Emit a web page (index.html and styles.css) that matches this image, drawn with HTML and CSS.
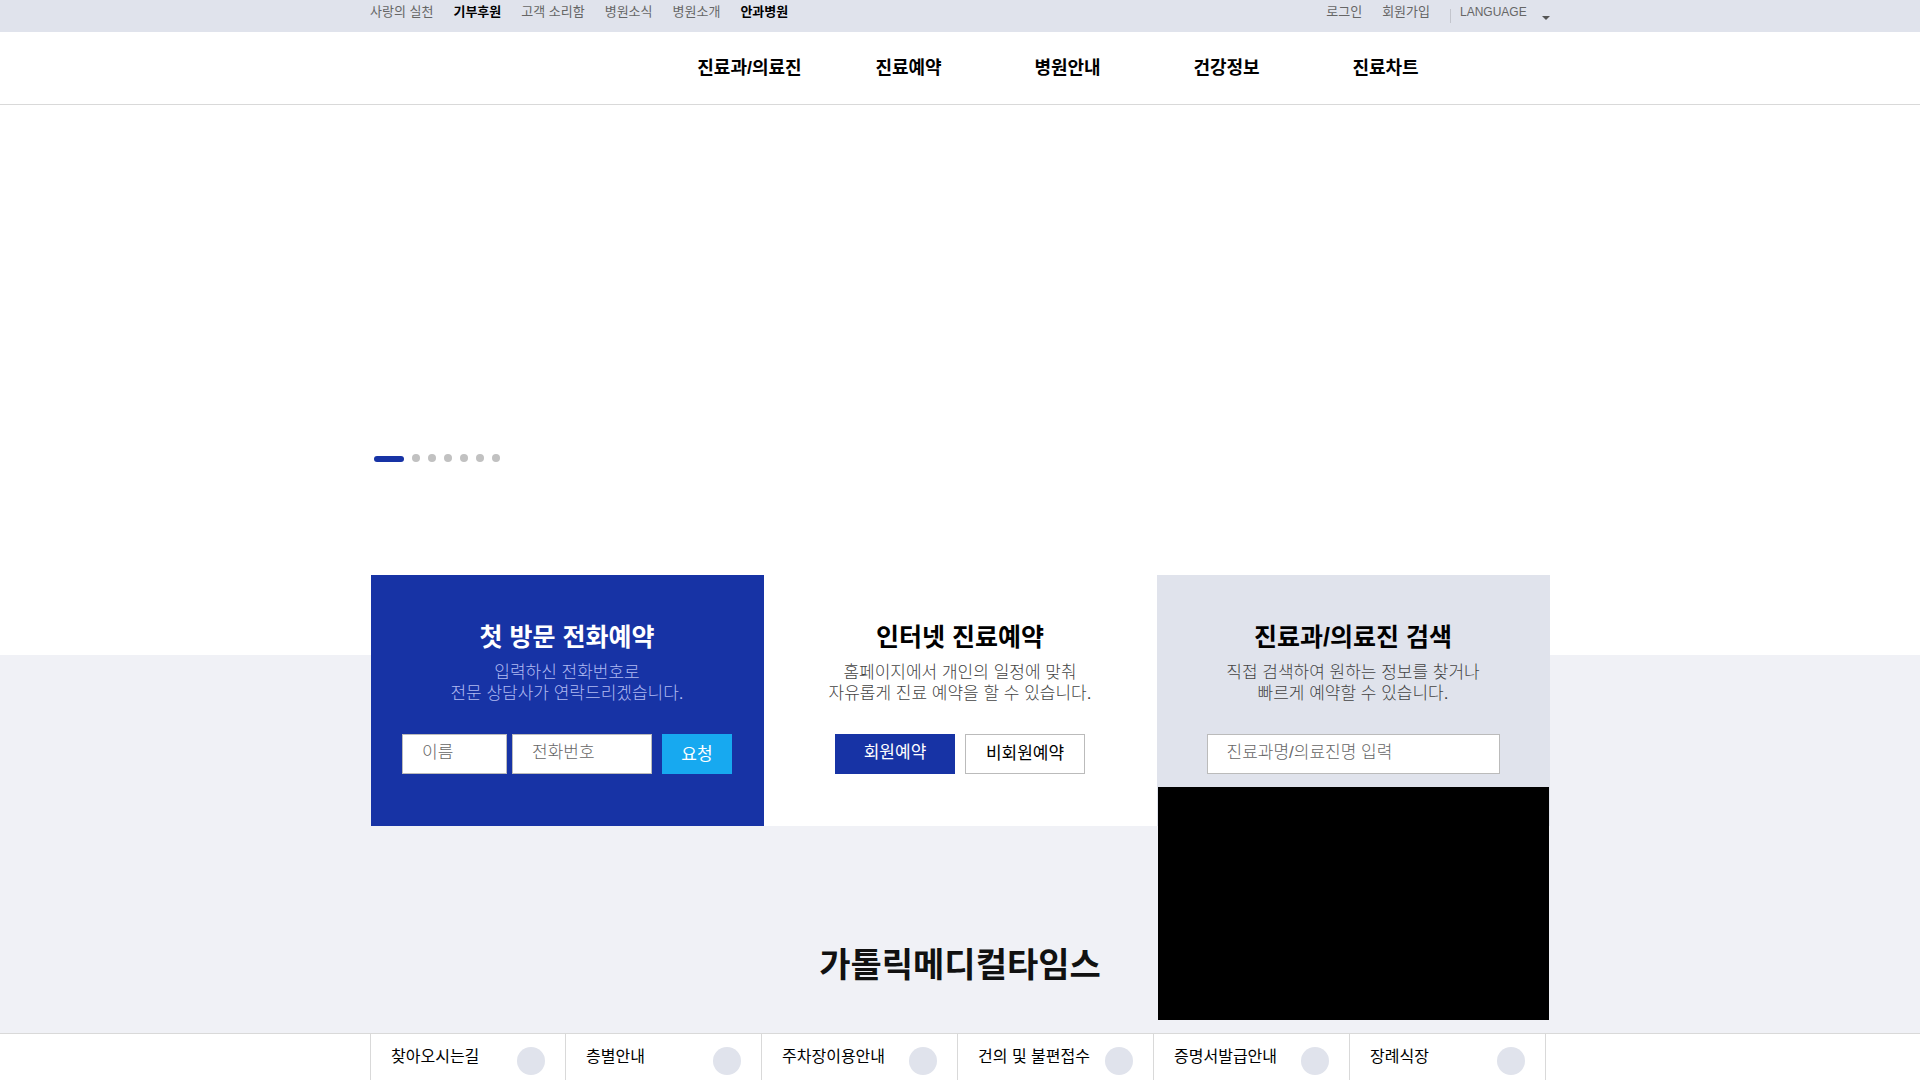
FILE: index.html
```html
<!DOCTYPE html>
<html lang="ko">
<head>
  <meta charset="UTF-8" />
  <meta name="viewport" content="width=device-width, initial-scale=1" />
  <title>가톨릭메디컬타임스</title>
  <link rel="stylesheet" href="styles.css">
</head>
<body>
  <div class="top-bar">
    <div class="container top-inner">
      <ul class="top-links">
        <li><a href="#">사랑의 실천</a></li>
        <li><a href="#" class="strong">기부후원</a></li>
        <li><a href="#">고객 소리함</a></li>
        <li><a href="#">병원소식</a></li>
        <li><a href="#">병원소개</a></li>
        <li><a href="#" class="strong">안과병원</a></li>
      </ul>
      <ul class="top-links member">
        <li><a href="#">로그인</a></li>
        <li><a href="#">회원가입</a></li>
        <li class="language">
          <select aria-label="LANGUAGE">
            <option>LANGUAGE</option>
          </select>
          <svg class="caret" width="8" height="4" viewBox="0 0 8 4"><path d="M0 0h8L4 4z" fill="#555"/></svg>
        </li>
      </ul>
    </div>
  </div>

  <header class="header">
    <nav class="container main-nav">
      <a href="#">진료과/의료진</a>
      <a href="#">진료예약</a>
      <a href="#">병원안내</a>
      <a href="#">건강정보</a>
      <a href="#">진료차트</a>
    </nav>
  </header>

  <!-- Main visual slider -->
  <section class="visual">
    <div class="container pager">
      <button class="dot active" aria-label="1"></button>
      <button class="dot" aria-label="2"></button>
      <button class="dot" aria-label="3"></button>
      <button class="dot" aria-label="4"></button>
      <button class="dot" aria-label="5"></button>
      <button class="dot" aria-label="6"></button>
      <button class="dot" aria-label="7"></button>
    </div>
  </section>

  <main class="content">
    <div class="container cards">
      <section class="card card-call">
        <h2>첫 방문 전화예약</h2>
        <p>입력하신 전화번호로<br>전문 상담사가 연락드리겠습니다.</p>
        <form class="controls call-form">
          <input type="text" class="name" placeholder="이름" aria-label="이름">
          <input type="tel" class="phone" placeholder="전화번호" aria-label="전화번호">
          <button type="button" class="request">요청</button>
        </form>
      </section>

      <section class="card card-internet">
        <h2>인터넷 진료예약</h2>
        <p>홈페이지에서 개인의 일정에 맞춰<br>자유롭게 진료 예약을 할 수 있습니다.</p>
        <div class="controls">
          <a href="#" class="btn btn-member">회원예약</a>
          <a href="#" class="btn btn-guest">비회원예약</a>
        </div>
      </section>

      <section class="card card-search">
        <h2>진료과/의료진 검색</h2>
        <p>직접 검색하여 원하는 정보를 찾거나<br>빠르게 예약할 수 있습니다.</p>
        <form class="controls">
          <input type="text" class="keyword" placeholder="진료과명/의료진명 입력" aria-label="진료과명/의료진명 입력">
        </form>
        <div class="search-layer"></div>
      </section>
    </div>

    <h2 class="times-title">가톨릭메디컬타임스</h2>
  </main>

  <!-- Quick menu at the bottom -->
  <footer class="quick">
    <ul class="container quick-list">
      <li><a href="#">찾아오시는길<span class="circle"></span></a></li>
      <li><a href="#">층별안내<span class="circle"></span></a></li>
      <li><a href="#">주차장이용안내<span class="circle"></span></a></li>
      <li><a href="#">건의 및 불편접수<span class="circle"></span></a></li>
      <li><a href="#">증명서발급안내<span class="circle"></span></a></li>
      <li><a href="#">장례식장<span class="circle"></span></a></li>
    </ul>
  </footer>
</body>
</html>
```

FILE: styles.css
```css
/* Basic Reset */
* {
  margin: 0;
  padding: 0;
  box-sizing: border-box;
}

body {
  display: flex;
  flex-direction: column;
  min-height: 100vh;
  font-family: "Liberation Sans", "Noto Sans CJK KR", sans-serif;
  font-size: 17px;
  color: #000;
  background: #fff;
}

ul {
  list-style: none;
}

a {
  color: inherit;
  text-decoration: none;
}

input,
button,
select {
  font: inherit;
  border: 0;
  border-radius: 0;
}

button {
  cursor: pointer;
}

.container {
  width: 100%;
  max-width: 1180px;
  margin: 0 auto;
}

/* Top bar */
.top-bar {
  background: #e0e3ec;
}

.top-inner {
  display: flex;
  justify-content: space-between;
  height: 32px;
}

.top-links {
  display: flex;
  gap: 20px;
  font-size: 13px;
  line-height: 24px;
  color: #666;
}

.top-links .strong {
  font-weight: bold;
  color: #000;
}

.language {
  display: flex;
  align-items: center;
  height: 32px;
  position: relative;
}

.language::before {
  content: "";
  width: 1px;
  height: 14px;
  background: #c3c5cd;
}

.language select {
  width: 90px;
  height: 24px;
  margin-left: 9px;
  align-self: flex-start;
  appearance: none;
  background: none;
  font-size: 12px;
  color: #666;
}

/* arrow over the right end of the select */
.caret {
  position: absolute;
  right: 0;
  top: 16px;
  pointer-events: none;
}

/* Header */
.header {
  border-bottom: 1px solid #d9d9d9;
}

.main-nav {
  display: grid;
  grid-template-columns: repeat(5, 159px);
  padding-left: 300px;
  font-size: 18px;
  font-weight: bold;
  line-height: 72px;
  text-align: center;
}

/* Main visual */
.visual {
  display: flex;
  align-items: flex-end;
  height: 550px;
  padding-bottom: 193px;
}

.pager {
  display: flex;
  align-items: flex-end;
  gap: 8px;
  padding-left: 4px;
}

.dot {
  width: 8px;
  height: 8px;
  border-radius: 50%;
  background: #c1c1c1;
}

.dot.active {
  width: 30px;
  height: 6px;
  border-radius: 3px;
  background: #1733a5;
}

/* Reservation cards */
.content {
  flex: 1;
  background: #f0f1f6;
}

.cards {
  display: grid;
  grid-template-columns: repeat(3, 1fr);
  max-width: 1179px;
  margin-top: -80px;
}

.card {
  position: relative;
  padding: 42px 31px 52px;
  text-align: center;
  background: #fff;
}

.card h2 {
  font-size: 25px;
  line-height: 40px;
}

.card p {
  margin-top: 5px;
  font-weight: 300;
  line-height: 21px;
  color: #444;
}

.controls {
  display: flex;
  justify-content: center;
  gap: 10px;
  margin-top: 30px;
}

.controls input {
  height: 40px;
  padding: 0 19px 2px;
  border: 1px solid #bbb;
  font-weight: 300;
  background: #fff;
}

.controls input::placeholder {
  color: #666;
}

.card-call {
  background: #1733a5;
}

.card-call h2 {
  color: #fff;
}

.card-call p {
  color: #b0baf2;
}

.call-form {
  gap: 5px;
}

.name {
  width: 105px;
}

.phone {
  width: 140px;
}

.request {
  width: 70px;
  height: 40px;
  margin-left: 5px;
  padding-bottom: 4px;
  color: #fff;
  background: #17a9f0;
}

.btn {
  width: 120px;
  height: 40px;
  line-height: 38px;
}

.btn-member {
  color: #fff;
  background: #1733a5;
}

.btn-guest {
  border: 1px solid #bbb;
}

.card-search {
  background: #e0e3ec;
}

.keyword {
  width: 293px;
}

/* opens over the content below the search box */
.search-layer {
  position: absolute;
  top: 212px;
  left: 1px;
  right: 1px;
  height: 233px;
  background: #000;
}

.times-title {
  margin-top: 114px;
  font-size: 34px;
  line-height: 50px;
  text-align: center;
  color: #111;
}

/* Quick menu */
.quick {
  border-top: 1px solid #d9d9d9;
  background: #fff;
}

.quick-list {
  display: grid;
  grid-template-columns: repeat(6, 196px);
}

.quick-list li {
  border-right: 1px solid #d9d9d9;
}

.quick-list li:first-child {
  border-left: 1px solid #d9d9d9;
}

.quick-list a {
  display: flex;
  justify-content: space-between;
  height: 46px;
  padding: 0 20px;
  font-size: 16px;
  line-height: 46px;
}

.circle {
  width: 28px;
  height: 28px;
  margin-top: 13px;
  border-radius: 50%;
  background: #e0e3ec;
}
```
